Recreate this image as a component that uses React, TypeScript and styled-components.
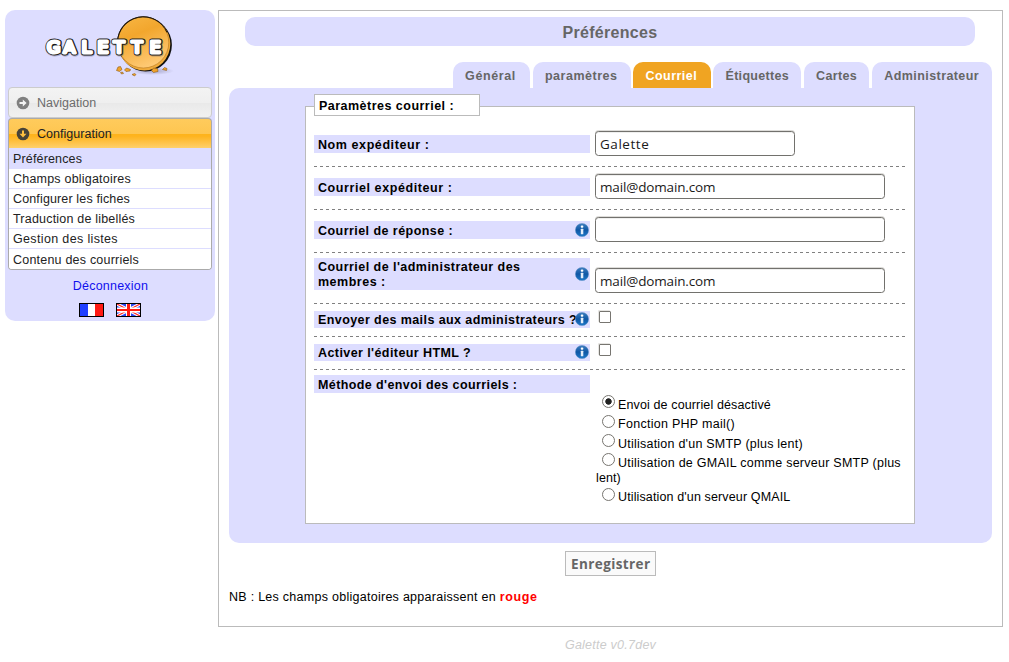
import React from 'react';
import styled, { createGlobalStyle } from 'styled-components';

const lilac = '#ddddff';
const line = '#bbbbbb';

const GlobalStyle = createGlobalStyle`
  * { box-sizing: border-box; }
  body {
    margin: 0;
    background: #fff;
    color: #000;
    font: 12.5px/15px "Liberation Sans", Arial, sans-serif;
  }
`;

const Txt = styled.span<{ $ls?: number }>`
  letter-spacing: ${(p) => p.$ls ?? 0}px;
  white-space: nowrap;
`;

const Page = styled.div`
  display: flex;
  align-items: flex-start;
  gap: 3px;
  width: 1009px;
  height: 662px;
  padding: 10px 6px 0 5px;
  overflow: hidden;
`;

const Sidebar = styled.aside`
  display: flex;
  flex-direction: column;
  width: 210px;
  height: 311px;
  padding: 0 3px;
  border-radius: 10px;
  background: ${lilac};
`;

const LogoBox = styled.div`
  height: 77px;
  padding: 2px 0 0 34px;
  svg { display: block; }
`;

const MenuHeader = styled.div<{ $open?: boolean }>`
  display: flex;
  align-items: center;
  gap: 7px;
  height: ${(p) => (p.$open ? 30 : 31)}px;
  padding: 1px 0 0 7px;
  border: 1px solid ${(p) => (p.$open ? '#aaaaaa' : '#cccccc')};
  border-bottom-width: ${(p) => (p.$open ? 0 : 1)}px;
  border-radius: ${(p) => (p.$open ? '4px 4px 0 0' : '4px')};
  color: ${(p) => (p.$open ? '#222' : '#6c6c6c')};
  background: ${(p) =>
    p.$open
      ? 'linear-gradient(#ffcb5c 0, #fec651 50%, #feb31a 52%, #feb420 60%, #fed06b 100%)'
      : 'linear-gradient(#f3f3f3 0, #efefef 50%, #e9e9e9 52%, #f1f1f1 100%)'};
  svg { margin-top: -1px; }
`;

const MenuList = styled.ul`
  margin: 0;
  padding: 0;
  height: 122px;
  list-style: none;
  overflow: hidden;
  border: 1px solid #aaaaaa;
  border-top: 0;
  border-radius: 0 0 4px 4px;
  background: #fff;
`;

const MenuItem = styled.li<{ $current?: boolean }>`
  height: ${(p) => (p.$current ? 21 : 20)}px;
  padding-left: 4px;
  line-height: ${(p) => (p.$current ? 23 : 21)}px;
  color: #222;
  background: ${(p) => (p.$current ? lilac : '#fff')};
  border-bottom: 1px solid ${lilac};
  &:last-child { height: 21px; line-height: 22px; border-bottom: 0; }
`;

const Logout = styled.a`
  margin: 9px 0 0 1px;
  text-align: center;
  color: #1010ee;
`;

const Flags = styled.div`
  display: flex;
  gap: 12px;
  margin: 9px 0 0 71px;
  svg { display: block; }
`;

const Column = styled.div`
  width: 785px;
`;

const Main = styled.main`
  height: 617px;
  padding: 6px 10px 0;
  border: 1px solid ${line};
`;

const Title = styled.h1`
  width: 730px;
  height: 29px;
  margin: 0 0 0 16px;
  border-radius: 10px;
  background: ${lilac};
  color: #666;
  font-size: 16px;
  line-height: 31px;
  text-align: center;
`;

const Tabs = styled.nav`
  display: flex;
  justify-content: flex-end;
  gap: 2.6px;
  margin-top: 16px;
`;

const Tab = styled.a<{ $w: number; $active?: boolean }>`
  width: ${(p) => p.$w}px;
  height: 26px;
  padding-left: 12.3px;
  border-radius: 10px 10px 0 0;
  background: ${(p) => (p.$active ? '#f0a422' : lilac)};
  color: ${(p) => (p.$active ? '#fff' : '#666')};
  font-weight: bold;
  line-height: 29px;
`;

const Panel = styled.section`
  height: 455px;
  padding: 18px 77px 0 76px;
  border-radius: 10px 0 10px 10px;
  background: ${lilac};
`;

const Group = styled.div`
  height: 418px;
  padding: 0 9px 0 8px;
  border: 1px solid ${line};
  background: #fff;
`;

const Legend = styled.div`
  width: 166px;
  height: 22px;
  margin: -13px 0 8px;
  padding-left: 4px;
  border: 1px solid ${line};
  background: #fff;
  font-weight: bold;
  line-height: 22px;
`;

const Row = styled.div<{ $h: number; $plain?: boolean }>`
  display: flex;
  align-items: flex-start;
  gap: 5px;
  height: ${(p) => p.$h}px;
  background: ${(p) =>
    p.$plain
      ? 'none'
      : 'repeating-linear-gradient(90deg, #808080 0 3px, transparent 3px 6px) 0 100% / 100% 1px no-repeat'};
`;

const Label = styled.label<{ $top: number; $h: number }>`
  display: flex;
  align-items: center;
  justify-content: space-between;
  width: 276px;
  height: ${(p) => p.$h}px;
  margin-top: ${(p) => p.$top}px;
  padding: ${(p) => (p.$h === 18 ? 2 : 1)}px 1px 0 4px;
  background: ${lilac};
  font-weight: bold;
  svg { flex: none; margin: -2px 0 0 -6px; }
`;

const Lines = styled.span`
  display: flex;
  flex-direction: column;
`;

const Input = styled.input<{ $w?: number; $top?: number; $ls?: number }>`
  width: ${(p) => p.$w ?? 290}px;
  height: 25px;
  margin: ${(p) => p.$top ?? 7}px 0 0;
  padding: 0 4px;
  border: 1px solid #72716d;
  border-radius: 3.5px;
  outline: none;
  background: #fff;
  box-shadow: 0 -1px 0 #dddcd9, inset 0 1px 0 #efefee;
  color: #1a1a1a;
  font: 13.5px "Open Sans", "Noto Sans", sans-serif;
  letter-spacing: ${(p) => p.$ls ?? -0.15}px;
`;

const Check = styled.span`
  width: 12px;
  height: 12px;
  margin: 7px 0 0 4px;
  border: 1px solid #777570;
  border-radius: 1px;
  background: #fff;
  box-shadow: -1px -1px 0 #e6e5e2;
`;

const Options = styled.div`
  display: flex;
  flex-direction: column;
  gap: 4.33px;
  padding: 28px 0 0 1px;
`;

const Option = styled.div`
  line-height: 15px;
`;

const Radio = styled.span<{ $on?: boolean }>`
  display: inline-block;
  width: 13px;
  height: 13px;
  margin: -4px 3.5px 0 5.5px;
  vertical-align: 0.6px;
  border: 1px solid #777570;
  border-radius: 50%;
  background: ${(p) => (p.$on ? 'radial-gradient(circle, #222 0 2.8px, #fff 3.6px)' : '#fff')};
`;

const Save = styled.button`
  display: block;
  width: 91px;
  height: 25px;
  margin: 8px 0 0 336px;
  padding: 1px 0 0 5px;
  border: 1px solid ${line};
  background: #fafafa;
  color: #666;
  font: bold 13.5px/20px "Open Sans", "Noto Sans", sans-serif;
  text-align: left;
`;

const Note = styled.p`
  margin: 14px 0 0;
  white-space: nowrap;
`;

const Required = styled.strong`
  color: #f00;
`;

const Footer = styled.footer`
  margin-top: 11px;
  text-align: center;
  font-style: italic;
  color: #ccc;
`;

const Logo = () => (
  <svg width="136" height="68" viewBox="0 0 136 68">
    <defs>
      <linearGradient id="disc" x1="0.2" y1="0" x2="0.6" y2="1">
        <stop offset="0" stopColor="#f7b441" />
        <stop offset="0.35" stopColor="#f2a62d" />
        <stop offset="1" stopColor="#ffcb78" />
      </linearGradient>
      <radialGradient id="shade">
        <stop offset="0" stopColor="#77779a" stopOpacity="0.55" />
        <stop offset="1" stopColor="#77779a" stopOpacity="0" />
      </radialGradient>
    </defs>
    <ellipse cx="110" cy="59" rx="22" ry="4" fill="url(#shade)" />
    <ellipse cx="103.6" cy="33" rx="26.300" ry="26.600" fill="#111" />
    <ellipse cx="101.300" cy="30.400" rx="26.200" ry="26.200" fill="#14100a" />
    <ellipse cx="102.300" cy="32" rx="26" ry="26.400" fill="#f0ab3c" />
    <ellipse cx="101.300" cy="30.500" rx="25.500" ry="25.500" fill="url(#disc)" stroke="#a86b12" strokeWidth="0.5" />
    <path d="M75.500 30.500A25.800 25.800 0 0 1 125 20.500" fill="none" stroke="#14100a" strokeWidth="0.9" />
    <g fill="#f0a22a" stroke="#8a5a18" strokeWidth="0.6">
      <path d="M74.500 58.500l1.500-3.500 2.500-.5 1.500 3-2.500 2zM78.500 60.500l2-.5 1 1.500-2 .5zM82.500 58l2-2 4 1.500-.5 1.500-4 .5zM90 62.500l2.500-1 1.500 1-1.500 1.500zM109.500 58.500l2-2.500 4 .5.5 3-4.500 1zM120.500 57.500l2-2 2.500 1-.5 2z" />
    </g>
    <g
      transform="scale(1.15 1)"
      fontFamily="DejaVu Sans, sans-serif"
      fontSize="15"
      strokeLinejoin="round"
      strokeLinecap="round"
    >
      <text x="4.900 19.400 35.100 48.800 63.100 78.700 94.300" y="42.500" fill="#55556a" stroke="#55556a" strokeWidth="5" opacity="0.35">GALETTE</text>
      <text x="4.500 19 34.700 48.400 62.700 78.300 93.900" y="41" fill="#1a1a1a" stroke="#1a1a1a" strokeWidth="4.800">GALETTE</text>
      <text x="4.300 18.800 34.500 48.200 62.500 78.100 93.700" y="40.600" fill="#fff" stroke="#fff" strokeWidth="3">GALETTE</text>
    </g>
  </svg>
);

const Arrow = ({ down }: { down?: boolean }) => (
  <svg width="14" height="14" viewBox="0 0 14 14">
    <circle cx="7" cy="7" r="6.300" fill={down ? '#484338' : '#808080'} />
    <path
      d="M3.500 6h3.300V3.500L10.600 7l-3.800 3.500V8H3.500z"
      fill={down ? '#ffc040' : '#f4f4f4'}
      transform={down ? 'rotate(90 7 7)' : undefined}
    />
  </svg>
);

const Info = () => (
  <svg width="14" height="14" viewBox="0 0 14 14">
    <defs>
      <linearGradient id="info" x1="0" y1="0" x2="0" y2="1">
        <stop offset="0" stopColor="#3f7fc0" />
        <stop offset="0.5" stopColor="#0f57a5" />
        <stop offset="1" stopColor="#1d78c8" />
      </linearGradient>
    </defs>
    <circle cx="7" cy="7" r="6.600" fill="url(#info)" stroke="#5d8fc4" strokeWidth="0.5" />
    <rect x="5.800" y="2.500" width="2.500" height="2.200" rx="0.8" fill="#fff" />
    <rect x="5.800" y="5.700" width="2.500" height="5.600" rx="0.5" fill="#e4eefa" />
  </svg>
);

const FrenchFlag = () => (
  <svg width="25" height="14" viewBox="0 0 25 14" shapeRendering="crispEdges">
    <rect width="25" height="14" fill="#000" />
    <rect x="1" y="1" width="8" height="12" fill="#1f3fff" />
    <rect x="9" y="1" width="7" height="12" fill="#fff" />
    <rect x="16" y="1" width="8" height="12" fill="#ff1a14" />
  </svg>
);

const BritishFlag = () => (
  <svg width="25" height="14" viewBox="0 0 25 14">
    <rect width="25" height="14" fill="#000" />
    <rect x="1" y="1" width="23" height="12" fill="#2a45f5" />
    <path d="M1 1L24 13M24 1L1 13" stroke="#fff" strokeWidth="3.200" />
    <path d="M1 1L24 13M24 1L1 13" stroke="#ff2020" strokeWidth="1.200" />
    <path d="M12.500 1v12M1 7h23" stroke="#fff" strokeWidth="5" />
    <path d="M12.500 1v12" stroke="#ff1a14" strokeWidth="3" />
    <path d="M1 7h23" stroke="#ff1a14" strokeWidth="2" />
    <rect x="0.5" y="0.5" width="24" height="13" fill="none" stroke="#000" />
  </svg>
);

const menu: [string, number][] = [
  ['Préférences', 0.15],
  ['Champs obligatoires', 0.21],
  ['Configurer les fiches', 0.14],
  ['Traduction de libellés', 0.2],
  ['Gestion des listes', 0.35],
  ['Contenu des courriels', 0.21],
];

const tabs: [string, number, number][] = [
  ['Général', 77.3, 0.62],
  ['paramètres', 98, 0.52],
  ['Courriel', 77.4, 0.45],
  ['Étiquettes', 88, 0.3],
  ['Cartes', 65.6, 0.33],
  ['Administrateur', 120, 0.42],
];

export default function App() {
  return (
    <Page>
      <GlobalStyle />
      <Sidebar>
        <LogoBox><Logo /></LogoBox>
        <MenuHeader><Arrow /><Txt $ls={0.02}>Navigation</Txt></MenuHeader>
        <MenuHeader $open><Arrow down /><Txt $ls={0.03}>Configuration</Txt></MenuHeader>
        <MenuList>
          {menu.map(([name, ls], i) => (
            <MenuItem key={name} $current={i === 0}><Txt $ls={ls}>{name}</Txt></MenuItem>
          ))}
        </MenuList>
        <Logout><Txt $ls={0.22}>Déconnexion</Txt></Logout>
        <Flags><FrenchFlag /><BritishFlag /></Flags>
      </Sidebar>
      <Column>
        <Main>
          <Title><Txt $ls={0.3}>Préférences</Txt></Title>
          <Tabs>
            {tabs.map(([name, w, ls]) => (
              <Tab key={name} $w={w} $active={name === 'Courriel'}><Txt $ls={ls}>{name}</Txt></Tab>
            ))}
          </Tabs>
          <Panel>
            <Group>
              <Legend><Txt $ls={0.48}>Paramètres courriel :</Txt></Legend>
              <Row $h={43}>
                <Label $top={11} $h={18}><Txt $ls={0.58}>Nom expéditeur :</Txt></Label>
                <Input $w={200} $ls={0.55} defaultValue="Galette" />
              </Row>
              <Row $h={43}>
                <Label $top={11} $h={18}><Txt $ls={0.58}>Courriel expéditeur :</Txt></Label>
                <Input defaultValue="mail@domain.com" />
              </Row>
              <Row $h={43}>
                <Label $top={11} $h={18}><Txt $ls={0.45}>Courriel de réponse :</Txt><Info /></Label>
                <Input />
              </Row>
              <Row $h={51}>
                <Label $top={5} $h={32}>
                  <Lines>
                    <Txt $ls={0.46}>Courriel de l'administrateur des</Txt>
                    <Txt $ls={0.5}>membres :</Txt>
                  </Lines>
                  <Info />
                </Label>
                <Input $top={15} defaultValue="mail@domain.com" />
              </Row>
              <Row $h={33}>
                <Label $top={7} $h={17}><Txt $ls={0.41}>Envoyer des mails aux administrateurs ?</Txt><Info /></Label>
                <Check />
              </Row>
              <Row $h={33}>
                <Label $top={7} $h={17}><Txt $ls={0.42}>Activer l'éditeur HTML ?</Txt><Info /></Label>
                <Check />
              </Row>
              <Row $h={150} $plain>
                <Label $top={5} $h={18}><Txt $ls={0.4}>Méthode d'envoi des courriels :</Txt></Label>
                <Options>
                  <Option><Radio $on /><Txt $ls={0.13}>Envoi de courriel désactivé</Txt></Option>
                  <Option><Radio /><Txt $ls={0.28}>Fonction PHP mail()</Txt></Option>
                  <Option><Radio /><Txt $ls={0.23}>Utilisation d'un SMTP (plus lent)</Txt></Option>
                  <Option>
                    <Radio /><Txt $ls={0.25}>Utilisation de GMAIL comme serveur SMTP (plus</Txt>
                    <br />
                    <Txt $ls={0.1}>lent)</Txt>
                  </Option>
                  <Option><Radio /><Txt $ls={0.13}>Utilisation d'un serveur QMAIL</Txt></Option>
                </Options>
              </Row>
            </Group>
          </Panel>
          <Save><Txt $ls={0.4}>Enregistrer</Txt></Save>
          <Note>
            <Txt $ls={0.27}>NB : Les champs obligatoires apparaissent en </Txt>
            <Required><Txt $ls={0.66}>rouge</Txt></Required>
          </Note>
        </Main>
        <Footer><Txt $ls={0.24}>Galette v0.7dev</Txt></Footer>
      </Column>
    </Page>
  );
}
